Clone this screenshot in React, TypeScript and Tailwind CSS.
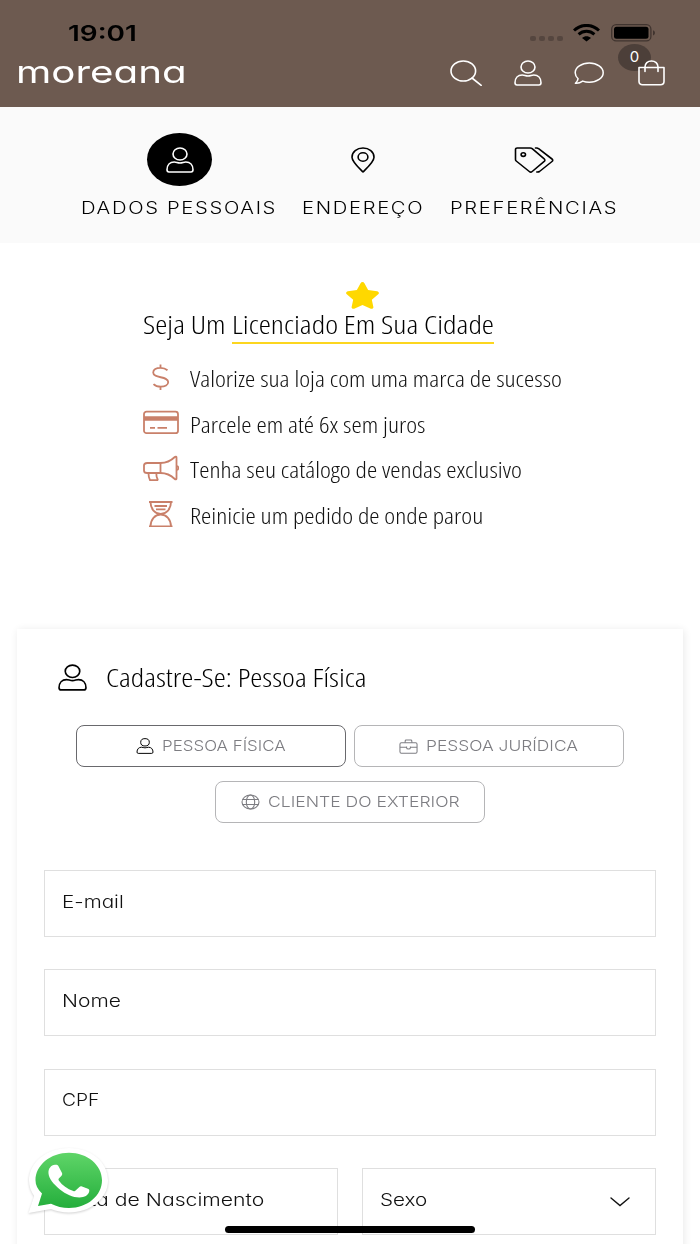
import type { ReactNode } from "react";

const round = "font-[Inter,sans-serif] font-light [font-feature-settings:'cv11']";
const condensed = "font-['Open_Sans',sans-serif] font-light [font-stretch:75%]";

function UserIcon({ className }: { className: string }) {
  return (
    <svg viewBox="0 0 28 26" className={className} fill="none" stroke="currentColor" strokeWidth="1.6">
      <ellipse cx="14" cy="7" rx="7" ry="6" />
      <path d="M1 22.8C1 18 4 15 8.2 15c2.2 0 3.3 1 5.8 1s3.6-1 5.8-1C24 15 27 18 27 22.8c0 1.5-.8 2.2-2 2.2H3c-1.200 0-2-.7-2-2.200z" />
    </svg>
  );
}

function SearchIcon() {
  return (
    <svg viewBox="0 0 32 26" className="w-8 h-[26px]" fill="none" stroke="currentColor" strokeWidth="1.6" strokeLinecap="round">
      <ellipse cx="13.3" cy="11" rx="12.300" ry="10" />
      <path d="M22 18l9.200 7.300" />
    </svg>
  );
}

function CommentIcon() {
  return (
    <svg viewBox="0 0 30 23" className="w-[30px] h-[23px]" fill="none" stroke="currentColor" strokeWidth="1.5" strokeLinejoin="round">
      <path d="M15.300 1C7.500 1 1.200 5.300 1.200 10.700c0 2.300 1.100 4.300 2.900 6C3.900 18.500 2.800 20 1.400 21.200c2.800.3 5.300-.7 7.300-2.100 2 .8 4.200 1.200 6.600 1.200C23 20.300 29.200 16 29.200 10.700S23 1 15.300 1z" />
    </svg>
  );
}

function BagIcon() {
  return (
    <svg viewBox="0 0 27 26" className="w-[27px] h-[26px]" fill="none" stroke="currentColor" strokeWidth="1.6">
      <path d="M1 7.500h25v14c0 2-1.500 3.200-3.500 3.200h-18C2.500 24.700 1 23.500 1 21.500z" strokeLinejoin="round" />
      <path d="M7 11.500V7c0-3.500 2.800-6 6.500-6S20 3.500 20 7v4.500" strokeLinecap="round" />
    </svg>
  );
}

function PinIcon() {
  return (
    <svg viewBox="0 0 24 26" className="w-6 h-[26px]" fill="none" stroke="currentColor" strokeWidth="1.6" strokeLinejoin="round">
      <path d="M12 25C9.500 22.300 1 15 1 10.200 1 5 5.900 1 12 1s11 4 11 9.200C23 15 14.500 22.300 12 25z" />
      <ellipse cx="12" cy="10" rx="4.900" ry="4.200" />
    </svg>
  );
}

function TagsIcon() {
  return (
    <svg viewBox="0 0 40 26" className="w-10 h-[26px]" fill="none" stroke="currentColor" strokeWidth="1.6" strokeLinejoin="round" strokeLinecap="round">
      <path d="M1.500 2.500C1.500 1.600 2.200 1 3.200 1h13c.8 0 1.500.3 2 .7l12 10.200c.9.800.9 1.700 0 2.500L18.200 24.500c-.9.800-2 .8-2.900 0L2.200 14c-.5-.4-.7-.9-.7-1.500z" />
      <ellipse cx="9.300" cy="7.600" rx="2.200" ry="1.800" />
      <path d="M21.500 1h1.200c.8 0 1.400.2 1.900.7L38 12c1 .8 1 1.700 0 2.500L25.500 24.500c-.6.400-1.200.6-2.700.5" />
    </svg>
  );
}

function WifiIcon() {
  return (
    <svg viewBox="0 0 27 18" className="w-[27px] h-[18px]" fill="none" stroke="#000" strokeWidth="3">
      <path d="M1 6.500C8-.3 19-.3 26 6.500" />
      <path d="M5.600 10.300c4.600-4 11.200-4 15.800 0" />
      <path d="M9 14c2.700-2.300 6.300-2.300 9 0L13.500 17.500z" fill="#000" stroke="none" />
    </svg>
  );
}

function Battery() {
  return (
    <svg viewBox="0 0 45 18" className="w-[45px] h-[18px]">
      <rect x=".7" y=".7" width="39.200" height="16.200" rx="4.500" fill="none" stroke="#40342f" strokeWidth="1.300" />
      <rect x="3" y="2.800" width="34.500" height="12" rx="2.500" />
      <path d="M42 6.200c2.600.8 2.600 4.400 0 5.200z" fill="#40342f" />
    </svg>
  );
}

const benefits: { text: string; icon: ReactNode }[] = [
  {
    text: "Valorize sua loja com uma marca de sucesso",
    icon: (
      <path d="M17.500.5v4M17.500 22v4M24.500 6.200C22.500 4.500 20 3.800 17.500 3.800c-4.300 0-7.300 1.900-7.300 4.700 0 6.500 15 3 15 9.500 0 2.900-3.200 4.700-7.400 4.700-3 0-5.600-.9-7.300-2.600" />
    ),
  },
  {
    text: "Parcele em até 6x sem juros",
    icon: (
      <>
        <rect x="1" y="2.700" width="34" height="21.500" rx="2.500" />
        <path d="M1 9.500h34" strokeWidth="4.500" />
        <path d="M7 18.800h5M14.500 18.800H24" />
      </>
    ),
  },
  {
    text: "Tenha seu catálogo de vendas exclusivo",
    icon: (
      <>
        <path d="M17.500 8H4.200C2.300 8 1 9 1 10.600v4.800C1 17 2.300 18 4.200 18h13.300z" />
        <path d="M17.500 8c6 0 10.500-2.300 14.300-6 .8-.7 1.700-.4 1.700.5v21c0 1-.9 1.300-1.700.5-3.800-3.700-8.300-6-14.300-6" />
        <path d="M5.500 18.500c0 2.500.5 4.500 1.500 6.600h6.800c.9 0 1.100-.6.700-1.200-.9-1.400-1.300-2.600-1-5.200M34 11c1.800.6 1.800 3.400 0 4" />
      </>
    ),
  },
  {
    text: "Reinicie um pedido de onde parou",
    icon: (
      <>
        <path d="M6 1h23.500M6 25.500h23.500" />
        <path d="M7.500 1c0 7 4.500 12 10.200 12S28 8 28 1M7.500 25.500c0-7 4.500-12 10.200-12S28 18.500 28 25.500" />
        <path d="M11.500 5h12.500M13 8.300h9.500" />
      </>
    ),
  },
];

function Field({ label, className = "", scale = "scale-x-[1.18]", children }: { label: string; className?: string; scale?: string; children?: ReactNode }) {
  return (
    <div className={`h-[67px] border-[1.5px] border-[#dfdfdf] bg-white flex items-center justify-between pl-[17px] pr-[25px] ${className}`}>
      <span className={`${round} ${scale} origin-left text-[17.5px] leading-6 pb-1 text-[#111] whitespace-nowrap`}>{label}</span>
      {children}
    </div>
  );
}

export default function App() {
  return (
    <div className="relative w-[700px] h-[1244px] overflow-hidden bg-white text-black">
      <header className="h-[107px] bg-[#6d5a50]">
        {/* Status bar */}
        <div className="flex items-start justify-between h-[48px] pl-[68px] pr-11">
          <span className="font-[Inter,sans-serif] font-semibold text-[22px] leading-7 mt-[19px] origin-left scale-x-[1.27]">19:01</span>
          <div className="flex items-start mt-6">
            <div className="flex gap-[3px] mt-3 mr-[10px]">
              <i className="w-[6px] h-[5px] rounded-[2px] bg-[#55463f]" />
              <i className="w-[6px] h-[5px] rounded-[2px] bg-[#55463f]" />
              <i className="w-[6px] h-[5px] rounded-[2px] bg-[#55463f]" />
              <i className="w-[6px] h-[5px] rounded-[2px] bg-[#55463f]" />
            </div>
            <WifiIcon />
            <div className="ml-[11px]">
              <Battery />
            </div>
          </div>
        </div>

        {/* Logo e ações */}
        <div className="flex items-center justify-between h-[50px] pl-4 pr-[35px] text-white">
          <span className="font-[Inter,sans-serif] [font-feature-settings:'cv11'] text-[31px] leading-8 pb-[2px] origin-left scale-x-[1.3]">moreana</span>
          <nav className="flex items-center">
            <SearchIcon />
            <UserIcon className="w-7 h-[26px] ml-8" />
            <div className="ml-8">
              <CommentIcon />
            </div>
            <div className="relative ml-[34px]">
              <span className="absolute -left-[20px] -top-[16px] w-[33px] h-[27px] rounded-[50%] bg-[#4c3f39] flex items-center justify-center font-[Inter,sans-serif] text-[15px]">
                0
              </span>
              <div className="relative">
                <BagIcon />
              </div>
            </div>
          </nav>
        </div>
      </header>

      {/* Etapas */}
      <section className={`h-[135.500px] bg-[#fafafa] flex justify-center gap-[26px] pt-[26px] pr-px text-[17px] tracking-[1.4px] ${round}`}>
        <div className="w-[195px] flex flex-col items-center">
          <div className="w-[65px] h-[53px] ml-[2px] rounded-[50%] bg-black text-white flex items-center justify-center">
            <UserIcon className="w-7 h-[26px]" />
          </div>
          <span className="self-start origin-left scale-x-[1.19] mt-[10px] leading-6 whitespace-nowrap">DADOS PESSOAIS</span>
        </div>
        <div className="w-[122px] flex flex-col items-center">
          <div className="h-[53px] flex items-center">
            <PinIcon />
          </div>
          <span className="self-start origin-left scale-x-[1.19] mt-[10px] leading-6 whitespace-nowrap">ENDEREÇO</span>
        </div>
        <div className="w-[168px] flex flex-col items-center">
          <div className="h-[53px] flex items-center">
            <TagsIcon />
          </div>
          <span className="self-start origin-left scale-x-[1.19] mt-[10px] leading-6 whitespace-nowrap">PREFERÊNCIAS</span>
        </div>
      </section>

      {/* Vantagens */}
      <section className={`h-[386.500px] pl-[143px] pt-[39.500px] ${condensed}`}>
        <svg viewBox="0 0 34 28" preserveAspectRatio="none" className="w-[33px] h-[27px] ml-[203px]" fill="#ffd800">
          <path d="M15 1.200c.8-1.500 3.200-1.500 4 0l3.800 7.200 9.200 1.100c1.900.3 2.500 2 1.200 3.200l-6.600 5.600 1.600 7.500c.3 1.500-1.600 2.500-3.200 1.800L17 23.800l-8 3.800c-1.600.7-3.500-.3-3.200-1.800l1.600-7.500L.8 12.700C-.5 11.500.1 9.800 2 9.500l9.200-1.100z" />
        </svg>
        <h2 className="flex text-[26px] leading-[31px] h-[35px] whitespace-nowrap">
          <span className="w-[89px] shrink-0">
            <span className="inline-block origin-left scale-x-[1.18]">Seja Um</span>
          </span>
          <span className="w-[262px] border-b-2 border-[#fcd61f]">
            <span className="inline-block origin-left scale-x-[1.184]">Licenciado Em Sua Cidade</span>
          </span>
        </h2>
        <ul className="mt-[10px]">
          {benefits.map((b) => (
            <li key={b.text} className="flex items-center h-[45.7px]">
              <svg viewBox="0 0 36 26.5" className="w-9 h-[26.5px] mr-[11px]" fill="none" stroke="#c9806a" strokeWidth="1.800">
                {b.icon}
              </svg>
              <span className="text-[22px] leading-7 pt-[2px] origin-left scale-x-[1.179] whitespace-nowrap text-[#111]">{b.text}</span>
            </li>
          ))}
        </ul>
      </section>

      {/* Cadastro */}
      <main className="h-[640px] mx-[17px] px-[27px] bg-white shadow-[1px_1px_8px_rgba(0,0,0,0.09)]">
        <h1 className={`flex items-center pl-[14px] pt-[29px] text-[26px] leading-[38px] ${condensed}`}>
          <UserIcon className="w-[29px] h-[27px]" />
          <span className="ml-[19px] origin-left scale-x-[1.177] whitespace-nowrap">Cadastre-Se: Pessoa Física</span>
        </h1>

        <div className={`flex flex-wrap justify-center gap-x-2 gap-y-[14px] mt-[29px] text-[15px] text-[#7d7d82] ${round}`}>
          <button className="w-[270px] h-[42px] rounded-lg border-[1.5px] border-[#69696d] flex items-center justify-center gap-2">
            <UserIcon className="w-[18px] h-4 text-black" />
            <span className="w-[125px] flex">
              <span className="origin-left scale-x-[1.13] whitespace-nowrap">PESSOA FÍSICA</span>
            </span>
          </button>
          <button className="w-[270px] h-[42px] rounded-lg border-[1.5px] border-[#b5b5b7] flex items-center justify-center gap-2">
            <svg viewBox="0 0 20 15" className="w-[19px] h-[15px]" fill="none" stroke="currentColor" strokeWidth="1.100">
              <rect x="1" y="3.500" width="18" height="11" rx="1.500" />
              <path d="M6.500 3.500V1.700c0-.6.400-1 1-1h5c.6 0 1 .4 1 1v1.800M1 8.300h6.800M12.200 8.300H19M8 7.500v1.300c0 1.900 4 1.900 4 0V7.500" />
            </svg>
            <span className="w-[153px] flex">
              <span className="origin-left scale-x-[1.16] whitespace-nowrap">PESSOA JURÍDICA</span>
            </span>
          </button>
          <button className="w-[270px] h-[42px] rounded-lg border-[1.5px] border-[#b5b5b7] flex items-center justify-center gap-2">
            <svg viewBox="0 0 19 16" className="w-[19px] h-4" fill="none" stroke="currentColor" strokeWidth="1.100">
              <ellipse cx="9.500" cy="8" rx="8.500" ry="7" />
              <ellipse cx="9.500" cy="8" rx="4.200" ry="7" />
              <path d="M1.500 5.500h16M1.500 10.500h16" />
            </svg>
            <span className="w-[192px] flex">
              <span className="origin-left scale-x-[1.17] whitespace-nowrap">CLIENTE DO EXTERIOR</span>
            </span>
          </button>
        </div>

        <form className="mt-[47px] flex flex-col gap-[32.400px]">
          <Field label="E-mail" />
          <Field label="Nome" scale="scale-x-[1.2]" />
          <Field label="CPF" scale="scale-x-[1.1]" />
          <div className="flex gap-6">
            <Field label="Data de Nascimento" scale="scale-x-[1.21]" className="flex-1" />
            <Field label="Sexo" className="flex-1">
              <svg viewBox="0 0 20 10" className="w-5 h-[10px]" fill="none" stroke="#111" strokeWidth="1.400" strokeLinecap="round">
                <path d="M1 1l9 7.500L19 1" />
              </svg>
            </Field>
          </div>
        </form>
      </main>

      {/* WhatsApp */}
      <svg viewBox="0 0 84 70" className="absolute left-[26px] top-[1146px] w-[84px] h-[70px] drop-shadow-[0_1px_1px_rgba(0,0,0,0.18)]">
        <defs>
          <linearGradient id="wa" x1="0" y1="0" x2="0" y2="1">
            <stop offset="0" stopColor="#5fd568" />
            <stop offset="1" stopColor="#24ae3c" />
          </linearGradient>
        </defs>
        <path fill="#fff" d="M2.500 67l5.700-17C5 45.500 3 40 3 34.500 3 16.500 20.500 2 43 2s39 14.500 39 32.500S64.500 66.500 43 66.500c-6.500 0-12.500-1.300-18-3.500z" />
        <path fill="url(#wa)" d="M12 60l4-12.500C11.500 43.500 9.500 39 9.500 34.300 9.500 19 24.500 6.700 43 6.700S76 19 76 34.300 61.500 62 43 62c-6.500 0-12.500-1.500-18-4.300z" />
        <path fill="#fff" d="M29 18.800c1.500-.2 2.800.1 3.500 1.500l3.400 6.400c.6 1.200.3 2.200-.6 3.200l-2.500 2.700c-.5.600-.5 1.200 0 1.900 3.500 5 8.500 8.400 14.500 10.500 1 .4 1.700.2 2.300-.4l3.800-3.700c.7-.7 1.500-.9 2.600-.5l6 2.400c1.200.5 1.500 1.300 1.200 2.700-1 4-4.500 5.800-9.800 5.900-6.500 0-13.500-3.100-19.800-8.200-6-5-10.600-10.500-11.100-15.700-.4-5 2.500-8.300 6.500-8.700z" />
      </svg>

      {/* Home indicator */}
      <div className="absolute left-[225px] top-[1226px] w-[250px] h-[7px] rounded-full bg-black" />
    </div>
  );
}
